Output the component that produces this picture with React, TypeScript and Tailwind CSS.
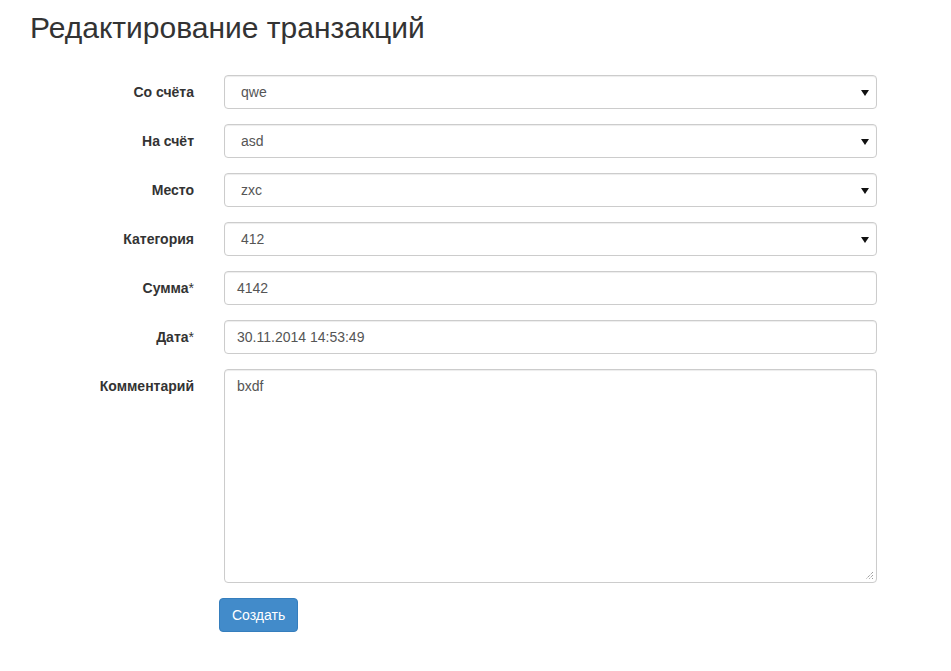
import React from 'react';

const fontStyle = 'font-["Liberation_Sans",Arial,sans-serif]';
const boxBase =
  'h-[34px] w-[653px] rounded-[4px] border border-[#cccccc] bg-white text-[14px] leading-[20px] text-[#555555] shadow-[inset_0_1px_1px_rgba(0,0,0,0.075)]';

function Label({ text, star }: { text: string; star?: boolean }) {
  return (
    <div className="w-[164px] shrink-0 pt-[7px] text-right text-[14px] font-bold leading-[20px] text-[#333333]">
      {text}
      {star && <span className="font-normal">*</span>}
    </div>
  );
}

function SelectBox({ value }: { value: string }) {
  return (
    <div className={`${boxBase} flex items-center justify-between pl-[16px] pr-[7px]`}>
      <span>{value}</span>
      <svg width="8" height="6" viewBox="0 0 8 6" className="mt-[1px]">
        <path d="M0 0 L8 0 L4 6 Z" fill="#111111" />
      </svg>
    </div>
  );
}

function InputBox({ value }: { value: string }) {
  return <div className={`${boxBase} flex items-center px-[12px]`}>{value}</div>;
}

export default function App() {
  const selects = [
    { label: 'Со счёта', value: 'qwe' },
    { label: 'На счёт', value: 'asd' },
    { label: 'Место', value: 'zxc' },
    { label: 'Категория', value: '412' },
  ];

  return (
    <div className={`${fontStyle} min-h-[671px] bg-white px-[30px] pt-[11px]`}>
      <h2 className="text-[30px] font-normal leading-[33px] text-[#333333]">Редактирование транзакций</h2>

      <div className="mt-[31px] flex flex-col gap-[15px]">
        {selects.map((row) => (
          <div key={row.label} className="flex items-start gap-[30px]">
            <Label text={row.label} />
            <SelectBox value={row.value} />
          </div>
        ))}

        <div className="flex items-start gap-[30px]">
          <Label text="Сумма" star />
          <InputBox value="4142" />
        </div>

        <div className="flex items-start gap-[30px]">
          <Label text="Дата" star />
          <InputBox value="30.11.2014 14:53:49" />
        </div>

        <div className="flex items-start gap-[30px]">
          <Label text="Комментарий" />
          <div className="relative h-[214px] w-[653px] rounded-[4px] border border-[#cccccc] bg-white px-[12px] py-[6px] text-[14px] leading-[20px] text-[#555555] shadow-[inset_0_1px_1px_rgba(0,0,0,0.075)]">
            bxdf
            <svg width="9" height="9" viewBox="0 0 9 9" className="absolute bottom-[2px] right-[2px]">
              <path d="M8 1 L1 8 M8 4 L4 8 M8 7 L7 8" stroke="#777777" strokeWidth="1" strokeDasharray="1 1" />
            </svg>
          </div>
        </div>
      </div>

      <div className="mt-[15px] pl-[189px]">
        <button className="h-[34px] rounded-[4px] border border-[#357ebd] bg-[#428bca] px-[12px] text-[14px] leading-[20px] text-white">
          Создать
        </button>
      </div>
    </div>
  );
}
